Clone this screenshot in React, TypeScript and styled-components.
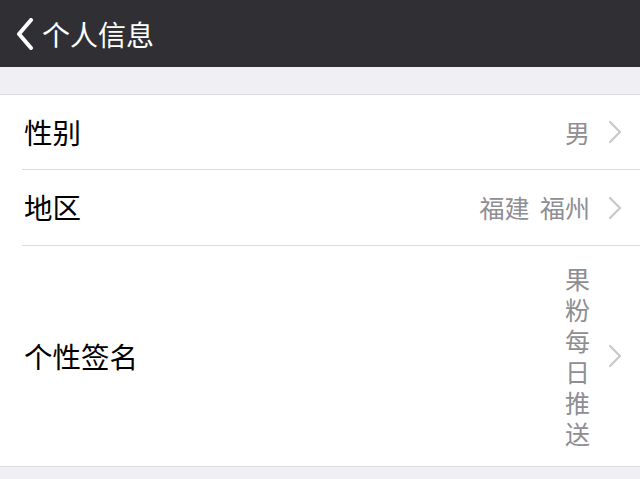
import React from "react";
import styled, { createGlobalStyle } from "styled-components";

const Global = createGlobalStyle`
  html, body { margin: 0; padding: 0; }
  body {
    background: #efeff4;
    font-family: "Noto Sans CJK SC", "Noto Sans", sans-serif;
  }
`;

const Page = styled.div`
  width: 640px;
  height: 479px;
  overflow: hidden;
  background: #efeff4;
  display: flex;
  flex-direction: column;
`;

const NavBar = styled.header`
  height: 67px;
  flex: none;
  background: #303034;
  display: flex;
  align-items: center;
  padding-left: 15px;
  gap: 7px;
  color: #ffffff;
  box-sizing: border-box;
`;

const BackIcon = styled.svg`
  width: 20px;
  height: 32px;
  flex: none;
`;

const Title = styled.h1`
  margin: 0;
  font-size: 28px;
  font-weight: 400;
  line-height: 1;
`;

const Spacer = styled.div`
  height: 27px;
  flex: none;
`;

const List = styled.ul`
  list-style: none;
  margin: 0;
  padding: 0;
  background: #ffffff;
  border-top: 1px solid #dcdce0;
  border-bottom: 1px solid #dcdce0;
`;

const Row = styled.li<{ $last?: boolean; $tall?: boolean; $h?: number }>`
  position: relative;
  display: flex;
  align-items: center;
  min-height: ${(p) => p.$h ?? 75}px;
  padding: ${(p) => (p.$tall ? "17px" : "0")} 18px ${(p) => (p.$tall ? "17px" : "0")} 24px;
  box-sizing: border-box;
  border-bottom: ${(p) => (p.$last ? "none" : "1px solid transparent")};
  &::after {
    content: "";
    display: ${(p) => (p.$last ? "none" : "block")};
    position: absolute;
    left: 22px;
    right: 0;
    bottom: -1px;
    height: 1px;
    background: #dcdce0;
  }
`;

const Label = styled.span`
  flex: 1;
  font-size: 28.5px;
  color: #000000;
  line-height: 1;
`;

const Value = styled.span<{ $stacked?: boolean }>`
  font-size: 25px;
  color: #8e8e93;
  line-height: ${(p) => (p.$stacked ? "31px" : "1")};
  width: ${(p) => (p.$stacked ? "25px" : "auto")};
  text-align: right;
  word-break: break-all;
  word-spacing: 5px;
`;

const Chevron = styled.svg`
  width: 14px;
  height: 24px;
  margin-left: 18px;
  flex: none;
`;

const ChevronRight = () => (
  <Chevron viewBox="0 0 14 24">
    <path d="M2 2 L12 12 L2 22" fill="none" stroke="#c7c7cc" strokeWidth="2.2" strokeLinecap="round" strokeLinejoin="round" />
  </Chevron>
);

const rows = [
  { label: "性别", value: "男", h: 75 },
  { label: "地区", value: "福建 福州", h: 76 },
  { label: "个性签名", value: "果粉每日推送", stacked: true },
];

export default function App() {
  return (
    <Page>
      <Global />
      <NavBar>
        <BackIcon viewBox="0 0 20 32">
          <path d="M16 2 L4 16 L16 30" fill="none" stroke="#ffffff" strokeWidth="4" strokeLinecap="round" strokeLinejoin="round" />
        </BackIcon>
        <Title>个人信息</Title>
      </NavBar>
      <Spacer />
      <List>
        {rows.map((r, i) => (
          <Row key={r.label} $last={i === rows.length - 1} $tall={r.stacked} $h={r.h}>
            <Label>{r.label}</Label>
            <Value $stacked={r.stacked}>{r.value}</Value>
            <ChevronRight />
          </Row>
        ))}
      </List>
    </Page>
  );
}
